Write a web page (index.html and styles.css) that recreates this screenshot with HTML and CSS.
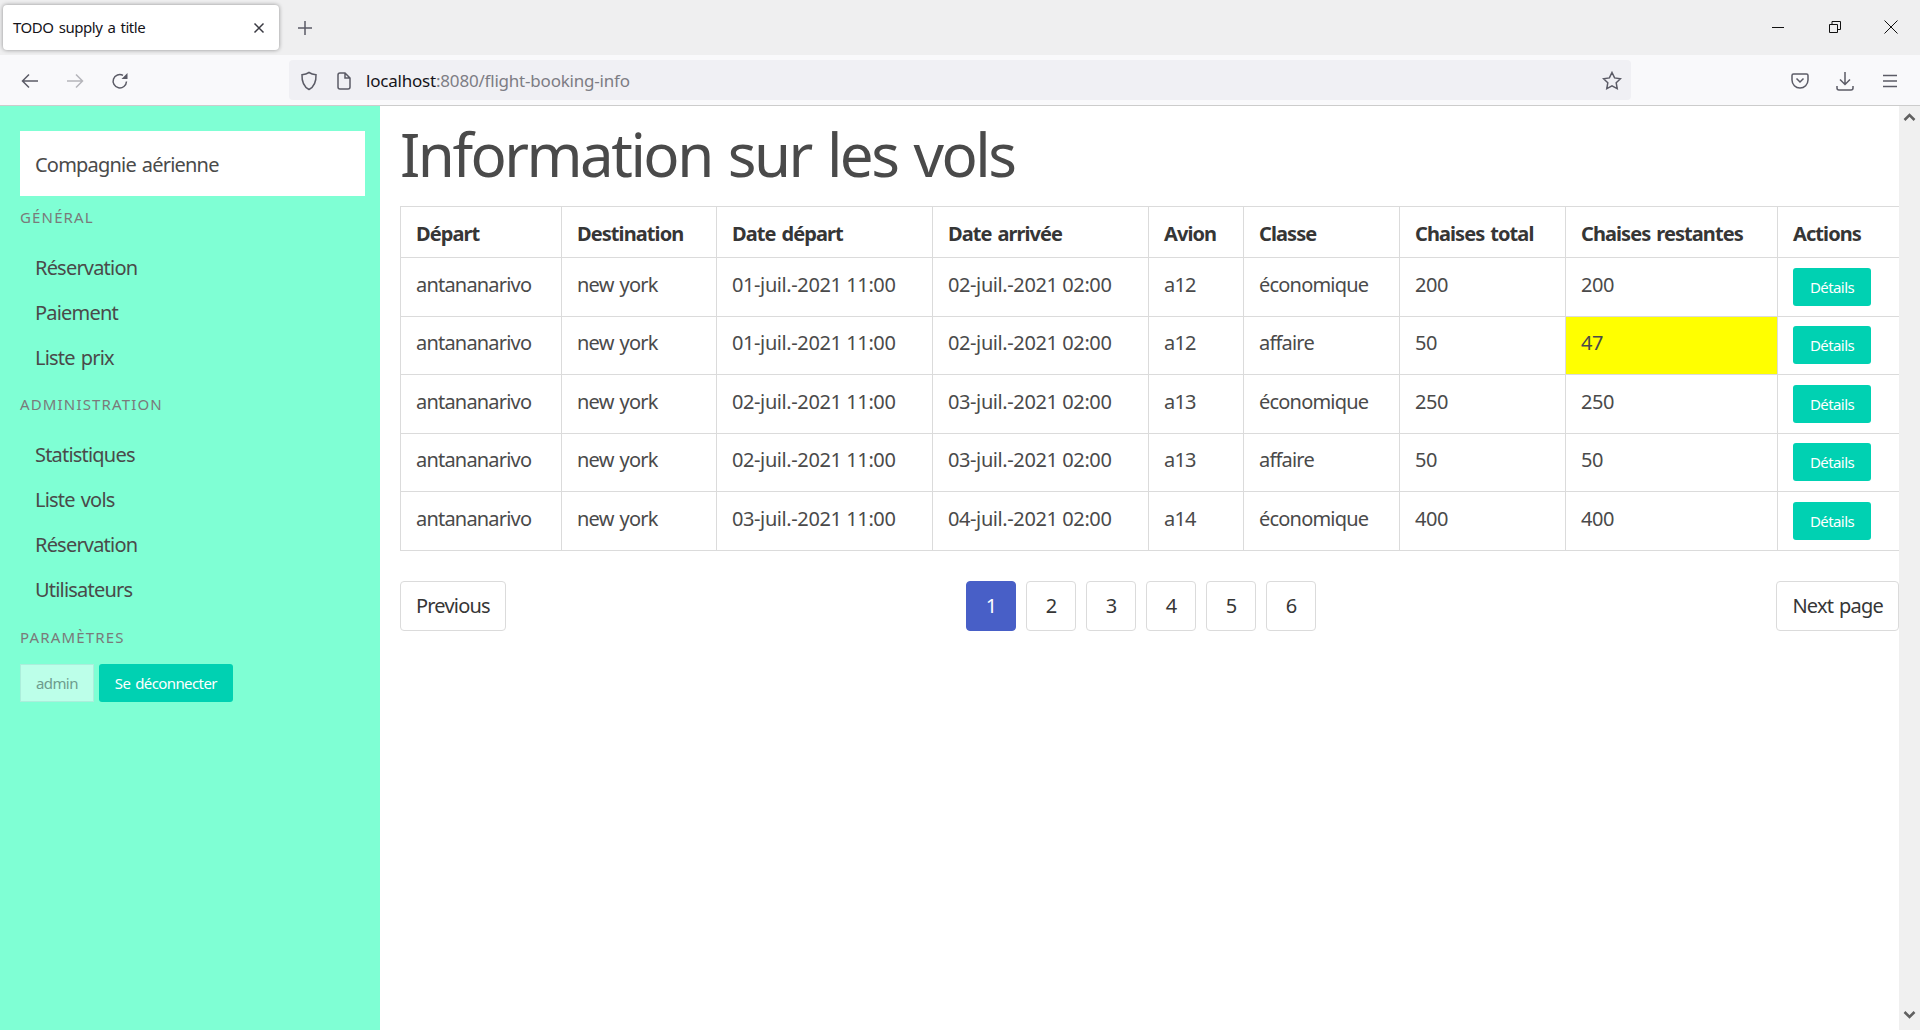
FILE: index.html

```html
<!DOCTYPE html>
<html lang="fr">
<head>
<meta charset="utf-8"/>
<meta content="width=device-width, initial-scale=1.0" name="viewport"/>
<title>TODO supply a title</title>
<link rel="stylesheet" href="styles.css">
</head>
<body>
    <!-- Barre du navigateur -->
    <header class="browser">
        <div class="tabbar">
            <div class="tab">
                <span class="tab-title">TODO supply a title</span>
                <svg class="tab-close" width="12" height="12" viewBox="0 0 12 12"><path d="M1.5 1.5l9 9M10.5 1.5l-9 9"/></svg>
            </div>
            <svg class="new-tab" width="16" height="16" viewBox="0 0 16 16"><path d="M8 1v14M1 8h14"/></svg>
            <div class="window-controls">
                <svg width="14" height="14" viewBox="0 0 14 14"><path d="M1 7.500h12"/></svg>
                <svg width="14" height="14" viewBox="0 0 14 14"><path d="M1.500 4.500h8v8h-8zM4 4.500v-3h8.500v8h-3"/></svg>
                <svg width="14" height="14" viewBox="0 0 14 14"><path d="M.5.500l13 13M13.500.500l-13 13"/></svg>
            </div>
        </div>
        <div class="toolbar">
            <svg class="tool back" width="18" height="16" viewBox="0 0 18 16"><path d="M17 8H2M8 1.500L1.500 8 8 14.500"/></svg>
            <svg class="tool forward" width="18" height="16" viewBox="0 0 18 16"><path d="M1 8h15M10 1.500L16.500 8 10 14.500"/></svg>
            <svg class="tool reload" width="18" height="18" viewBox="0 0 18 18"><path d="M15.500 9.500A6.700 6.700 0 1 1 12 3.300"/><path class="solid" d="M16.500 1v6h-6z"/></svg>
            <div class="urlbar">
                <svg class="tool" width="18" height="20" viewBox="0 0 18 20"><path d="M9 1.500c2 1.300 4.500 2 7 2.200 .3 6.500-1.500 11.800-7 14.800C3.500 15.500 1.700 10.200 2 3.700c2.500-.2 5-.9 7-2.200z"/></svg>
                <svg class="tool page" width="14" height="18" viewBox="0 0 14 18"><path d="M3 1h5l5 5v9a2 2 0 0 1-2 2H3a2 2 0 0 1-2-2V3a2 2 0 0 1 2-2zM8 1v5h5"/></svg>
                <span class="url"><span class="url-host">localhost</span>:8080/flight-booking-info</span>
                <svg class="tool star" width="20" height="20" viewBox="0 0 20 20"><path d="M10 1.500l2.600 5.400 5.900.8-4.300 4.100 1 5.900-5.200-2.800-5.200 2.800 1-5.900L1.500 7.700l5.900-.8z"/></svg>
            </div>
            <div class="toolbar-right">
                <svg class="tool" width="18" height="16" viewBox="0 0 18 16"><path d="M2.500 1h13A1.500 1.500 0 0 1 17 2.500V7a8 8 0 0 1-16 0V2.500A1.500 1.500 0 0 1 2.500 1zM5.500 5.500L9 9l3.500-3.500"/></svg>
                <svg class="tool" width="18" height="20" viewBox="0 0 18 20"><path d="M9 1v12M4 8.500l5 5 5-5M1 15v2a2 2 0 0 0 2 2h12a2 2 0 0 0 2-2v-2"/></svg>
                <svg class="tool burger" width="16" height="14" viewBox="0 0 16 14"><path d="M1 1.500h14M1 7h14M1 12.500h14"/></svg>
            </div>
        </div>
    </header>

    <div class="page-wrap">
        <aside class="sidebar">
            <div class="brand">Compagnie aérienne</div>
            <p class="menu-label">Général</p>
            <ul class="menu-list">
                <li><a href="#">Réservation</a></li>
                <li><a href="#">Paiement</a></li>
                <li><a href="#">Liste prix</a></li>
            </ul>
            <p class="menu-label">Administration</p>
            <ul class="menu-list">
                <li><a href="#">Statistiques</a></li>
                <li><a href="#">Liste vols</a></li>
                <li><a href="#">Réservation</a></li>
                <li><a href="#">Utilisateurs</a></li>
            </ul>
            <p class="menu-label">Paramètres</p>
            <div class="user-buttons">
                <span class="btn btn-static">admin</span>
                <a class="btn btn-primary" href="#">Se déconnecter</a>
            </div>
        </aside>

        <main class="content">
            <h1 class="title">Information sur les vols</h1>
            <table class="flights">
                <colgroup>
                    <col><col><col><col><col><col><col><col><col>
                </colgroup>
                <thead>
                    <tr>
                        <th>Départ</th>
                        <th>Destination</th>
                        <th>Date départ</th>
                        <th>Date arrivée</th>
                        <th>Avion</th>
                        <th>Classe</th>
                        <th>Chaises total</th>
                        <th>Chaises restantes</th>
                        <th>Actions</th>
                    </tr>
                </thead>
                <tbody>
                    <tr>
                        <td>antananarivo</td><td>new york</td><td>01-juil.-2021 11:00</td><td>02-juil.-2021 02:00</td><td>a12</td><td>économique</td><td>200</td><td>200</td>
                        <td><a class="btn btn-primary btn-details" href="#">Détails</a></td>
                    </tr>
                    <tr>
                        <td>antananarivo</td><td>new york</td><td>01-juil.-2021 11:00</td><td>02-juil.-2021 02:00</td><td>a12</td><td>affaire</td><td>50</td><td class="low-seats">47</td>
                        <td><a class="btn btn-primary btn-details" href="#">Détails</a></td>
                    </tr>
                    <tr>
                        <td>antananarivo</td><td>new york</td><td>02-juil.-2021 11:00</td><td>03-juil.-2021 02:00</td><td>a13</td><td>économique</td><td>250</td><td>250</td>
                        <td><a class="btn btn-primary btn-details" href="#">Détails</a></td>
                    </tr>
                    <tr>
                        <td>antananarivo</td><td>new york</td><td>02-juil.-2021 11:00</td><td>03-juil.-2021 02:00</td><td>a13</td><td>affaire</td><td>50</td><td>50</td>
                        <td><a class="btn btn-primary btn-details" href="#">Détails</a></td>
                    </tr>
                    <tr>
                        <td>antananarivo</td><td>new york</td><td>03-juil.-2021 11:00</td><td>04-juil.-2021 02:00</td><td>a14</td><td>économique</td><td>400</td><td>400</td>
                        <td><a class="btn btn-primary btn-details" href="#">Détails</a></td>
                    </tr>
                </tbody>
            </table>

            <nav class="pagination">
                <a class="page-btn page-wide" href="#">Previous</a>
                <ul class="page-list">
                    <li><a class="page-btn page-current" href="#">1</a></li>
                    <li><a class="page-btn" href="#">2</a></li>
                    <li><a class="page-btn" href="#">3</a></li>
                    <li><a class="page-btn" href="#">4</a></li>
                    <li><a class="page-btn" href="#">5</a></li>
                    <li><a class="page-btn" href="#">6</a></li>
                </ul>
                <a class="page-btn page-wide" href="#">Next page</a>
            </nav>
        </main>

        <div class="scrollbar">
            <svg width="13" height="9" viewBox="0 0 13 9"><path d="M1.500 7l5-5 5 5"/></svg>
            <svg width="13" height="9" viewBox="0 0 13 9"><path d="M1.500 2l5 5 5-5"/></svg>
        </div>
    </div>
</body>
</html>
```

FILE: styles.css

```css
* {
    box-sizing: border-box;
}

html {
    font-size: 20px;
}

body {
    margin: 0;
    height: 100vh;
    display: flex;
    flex-direction: column;
    overflow: hidden;
    background-color: #ffffff;
    color: #4a4a4a;
    font-family: "Noto Sans", "Open Sans", sans-serif;
    font-size: 20px;
    line-height: 1.5;
    letter-spacing: -0.04em;
    word-spacing: 0.08em;
}

a {
    color: inherit;
    text-decoration: none;
}

ul {
    list-style: none;
    margin: 0;
    padding: 0;
}

svg {
    display: block;
    flex: none;
    fill: none;
    stroke: #5b5b66;
    stroke-width: 1.5;
}

/* Barre du navigateur */
.browser {
    flex: none;
    height: 106px;
    border-bottom: 1px solid #cccccc;
}

.tabbar {
    height: 55px;
    background-color: #efeff0;
    display: flex;
    align-items: center;
    padding: 5px 0 0 3px;
}

.tab {
    width: 276px;
    height: 45px;
    margin-top: -5px;
    padding: 0 14px 0 10px;
    display: flex;
    align-items: center;
    justify-content: space-between;
    background-color: #ffffff;
    border-radius: 4px;
    box-shadow: 0 0 4px rgba(0, 0, 0, 0.4);
}

.tab-title {
    color: #15141a;
    font-size: 15px;
    letter-spacing: -0.03em;
}

.tab-close path {
    stroke: #3a3a42;
}

.new-tab {
    margin: -5px 0 0 18px;
}

.window-controls {
    margin: -7px 22px 0 auto;
    display: flex;
    gap: 42.5px;
}

.window-controls svg {
    stroke: #111111;
    stroke-width: 1;
}

.toolbar {
    height: 50px;
    padding: 1px 0 0 21px;
    background-color: #f9f9fb;
    display: flex;
    align-items: center;
}

.tool.forward {
    margin-left: 27px;
    stroke: #b5b5ba;
}

.tool.reload {
    margin-left: 27px;
}

.solid {
    fill: #5b5b66;
    stroke: none;
}

.urlbar {
    width: 1342px;
    height: 40px;
    margin: -1px 0 0 160px;
    padding: 2px 9px 0 11px;
    display: flex;
    align-items: center;
    background-color: #f0f0f4;
    border-radius: 4px;
}

.page {
    margin-left: 19px;
}

.url {
    margin-left: 15px;
    color: #7d7d84;
    font-size: 17px;
    letter-spacing: -0.012em;
}

.url-host {
    color: #15141a;
}

.star {
    margin-left: auto;
}

.toolbar-right {
    margin-left: 160px;
    display: flex;
    align-items: center;
    gap: 27px;
}

.burger {
    margin-left: 1px;
}

/* Mise en page */
.page-wrap {
    flex: 1;
    display: flex;
    min-height: 0;
}

.sidebar {
    flex: none;
    width: 380px;
    padding: 25px 15px 0 20px;
    background-color: #7fffd4;
}

.brand {
    height: 65px;
    padding: 2px 15px 0;
    display: flex;
    align-items: center;
    background-color: #ffffff;
    line-height: 1.25;
}

.menu-label {
    margin: 12px 0 18px;
    color: #7a7a7a;
    font-size: 15px;
    line-height: 1.25;
    letter-spacing: 0.077em;
    text-transform: uppercase;
}

.menu-list a {
    display: block;
    padding: 10px 15px;
    line-height: 1.25;
}

.menu-list + .menu-label {
    margin-top: 15.5px;
}

.user-buttons {
    display: flex;
    gap: 5px;
}

.btn {
    display: inline-flex;
    align-items: center;
    justify-content: center;
    height: 37.5px;
    padding: 0 15px;
    font-size: 15px;
    letter-spacing: -0.04em;
    border: 1px solid transparent;
    border-radius: 3px;
}

.btn-primary {
    background-color: #00d1b2;
    color: #ffffff;
}

.btn-static {
    background-color: #bcffe9;
    border-color: #abeedb;
    color: #6d9c8d;
    border-radius: 0;
}

.btn-details {
    display: flex;
    width: 78px;
    margin: -2px 0 2px;
    padding-top: 1px;
}

/* Contenu */
.content {
    flex: 1;
    min-width: 0;
    padding: 15px 0 0 20px;
}

.title {
    margin: 0 0 17.5px;
    color: #4a4a4a;
    font-size: 60px;
    font-weight: 400;
    line-height: 1.125;
    letter-spacing: -0.042em;
    word-spacing: 3px;
}

.flights {
    width: 1499px;
    table-layout: fixed;
    border-collapse: collapse;
}

.flights col:nth-child(1) { width: 161px; }
.flights col:nth-child(2) { width: 155px; }
.flights col:nth-child(3) { width: 216px; }
.flights col:nth-child(4) { width: 216px; }
.flights col:nth-child(5) { width: 95px; }
.flights col:nth-child(6) { width: 156px; }
.flights col:nth-child(7) { width: 166px; }
.flights col:nth-child(8) { width: 212px; }
.flights col:nth-child(9) { width: 122px; }

.flights th,
.flights td {
    padding: 12px 15px 8px;
    border: 1px solid #dbdbdb;
    text-align: left;
    vertical-align: top;
    white-space: nowrap;
}

.flights tbody tr:nth-child(even) td {
    padding-top: 11.5px;
    padding-bottom: 8.5px;
}

.flights td:nth-child(3),
.flights td:nth-child(4),
.flights td:nth-child(7),
.flights td:nth-child(8) {
    letter-spacing: -0.02em;
    word-spacing: 0;
}

.flights th {
    color: #363636;
    font-weight: 700;
    letter-spacing: -0.046em;
}

.low-seats {
    background-color: #ffff00;
}

.pagination {
    margin-top: 30.5px;
    display: flex;
    justify-content: space-between;
    width: 1499px;
}

.page-list {
    display: flex;
    gap: 10px;
}

.page-btn {
    display: flex;
    align-items: center;
    justify-content: center;
    min-width: 50px;
    height: 50px;
    border: 1px solid #dbdbdb;
    border-radius: 4px;
    color: #363636;
}

.page-wide {
    padding: 0 15px;
}

.page-current {
    background-color: #485fc7;
    border-color: #485fc7;
    color: #ffffff;
}

/* Barre de défilement */
.scrollbar {
    flex: none;
    width: 21px;
    padding: 7px 0 11px;
    display: flex;
    flex-direction: column;
    justify-content: space-between;
    align-items: center;
    background-color: #f0f0f0;
}

.scrollbar svg {
    stroke: #606060;
    stroke-width: 2.5;
}
```
